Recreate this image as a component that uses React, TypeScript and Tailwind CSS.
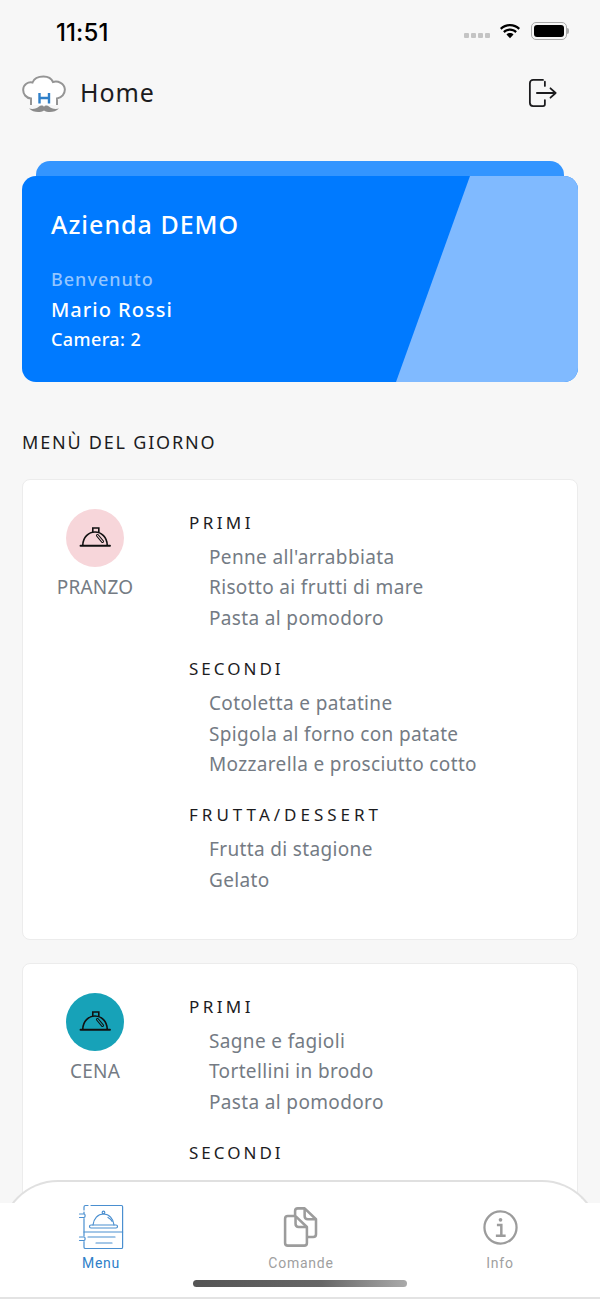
import React from "react";

const font = { fontFamily: '"Noto Sans", sans-serif' };

function Cloche({ inner }: { inner: string }) {
  return (
    <svg width={32} height={32} viewBox="0 0 32 32" fill="none" stroke="#111" strokeWidth="1.6">
      <path d="M1.500 23.700H31" strokeWidth="1.900" strokeLinecap="round" />
      <path d="M3.800 23C4 15.400 9.500 10 16 10C22.500 10 28 15.400 28.200 23" />
      <path d="M13.800 10V6H19.800V10" />
      <path d="M18.500 13.500L23.500 19.500" strokeWidth="3" strokeLinecap="round" />
      <path d="M18.500 13.500L23.500 19.500" strokeWidth="1.100" strokeLinecap="round" stroke={inner} />
    </svg>
  );
}

function Section({ title, items, track }: { title: string; items: string[]; track: string }) {
  return (
    <div className="mb-[26px]">
      <div className={`h-[20px] text-[17px] leading-[20px] text-[#1c1c1e] mb-[9px] ${track}`}>{title}</div>
      <div className="pl-[20px]">
        {items.map((t) => (
          <div key={t} className="h-[30.4px] text-[19px] leading-[30px] text-[#747b84] tracking-[0.35px] whitespace-nowrap">
            {t}
          </div>
        ))}
      </div>
    </div>
  );
}

function MealCard({
  label,
  circle,
  inner,
  sections,
  cls,
}: {
  label: string;
  circle: string;
  inner: string;
  sections: { title: string; track: string; items: string[] }[];
  cls: string;
}) {
  return (
    <div className={`mx-[22px] bg-white rounded-[8px] border border-[#ececec] flex shrink-0 ${cls}`}>
      <div className="w-[144px] shrink-0 flex flex-col items-center pt-[29px]">
        <div className={`w-[58px] h-[58px] rounded-full flex items-center justify-center ${circle}`}>
          <Cloche inner={inner} />
        </div>
        <div className="mt-[8px] text-[19px] leading-[24px] text-[#747b84] tracking-[0.2px]">{label}</div>
      </div>
      <div className="ml-[22px] pt-[33px]">
        {sections.map((s) => (
          <Section key={s.title} {...s} />
        ))}
      </div>
    </div>
  );
}

function Logo() {
  return (
    <svg width="44" height="40" viewBox="0 0 44 40" fill="none">
      <path
        d="M9 32V25.500C4 25 1 21 1.200 16.500C1.500 11.500 6 8.500 10.500 9.500C12 5.500 16.500 3.500 21.500 3.500C26 3.500 29.500 5.500 31 9C36 7.500 42.300 10.500 42.800 16C43.200 21 39.500 25 35 25.500V32"
        stroke="#959595"
        strokeWidth="2"
        fill="#fff"
      />
      <path
        d="M7 35.500C11 36.500 15 35.500 17 33.500C19 32 21 32.500 22 33.800C23 32.500 25 32 27 33.500C29 35.500 33 36.500 37 35.500C33 39.500 26 40 22 37.500C18 40 11 39.500 7 35.500Z"
        fill="#8c8c8c"
      />
      <path d="M17.500 20V30.500M27 20V30.500M17.500 25H27" stroke="#2f80c9" strokeWidth="2.400" />
    </svg>
  );
}

function Wifi() {
  return (
    <svg width="22" height="16" viewBox="0 0 22 16" fill="#000">
      <path d="M11 3.300C14.300 3.300 17.300 4.600 19.500 6.700L21 5C18.400 2.500 14.900 1 11 1C7.100 1 3.600 2.500 1 5L2.500 6.700C4.700 4.600 7.700 3.300 11 3.300Z" />
      <path d="M11 7.800C13 7.800 14.900 8.600 16.300 9.900L17.900 8.200C16 6.500 13.600 5.500 11 5.500C8.400 5.500 6 6.500 4.100 8.200L5.700 9.900C7.100 8.600 9 7.800 11 7.800Z" />
      <path d="M11 10C9.700 10 8.500 10.500 7.500 11.400L11 15.200L14.500 11.400C13.500 10.500 12.300 10 11 10Z" />
    </svg>
  );
}

function MenuBook() {
  return (
    <svg width="46" height="46" viewBox="0 0 46 46" fill="none" stroke="#4a8fd0" strokeWidth="1.200" strokeLinecap="round">
      <path d="M6 6V3C6 2 6.800 1.500 7.500 1.500H10M13 1.500H43.500C44.200 1.500 44.600 2 44.600 2.800V43.200C44.600 44 44.200 44.500 43.500 44.500H7.500C6.800 44.500 6 44 6 43.200V37.500M6 32V14.500M6 9.500V8" />
      <path d="M1.500 10H6C7.500 10 7.500 13.500 6 13.500H1.500M1.500 33H6C7.500 33 7.500 36.500 6 36.500H1.500" />
      <path d="M6 28H44.600" />
      <path d="M13 21H38C40 21 40 24 38 24H13C11 24 11 21 13 21Z" />
      <path d="M15 21C15.500 14.500 20 10 25.500 10C31 10 35.500 14.500 36 21" />
      <circle cx="25.500" cy="8.500" r="1.300" />
      <path d="M30 13.500C32 14.500 33.500 16 34.200 17.500" />
      <path d="M10 33H37M18 39H34" />
    </svg>
  );
}

function Docs() {
  return (
    <svg width="36" height="40" viewBox="0 0 38 44" fill="none" stroke="#9c9c9c" strokeWidth="2.800" strokeLinejoin="round">
      <path d="M12.500 9V4.500C12.500 2.800 13.800 1.500 15.500 1.500H23L35.500 13.500V30C35.500 31.700 34.200 33 32.500 33H26.500" />
      <path d="M23 1.500V10C23 12 24.200 13.500 26.500 13.500H35.500" />
      <path d="M4.500 10H13L25.500 22V39.500C25.500 41.200 24.200 42.500 22.500 42.500H4.500C2.800 42.500 1.500 41.200 1.500 39.500V13C1.500 11.300 2.800 10 4.500 10Z" />
      <path d="M13 10V18.500C13 20.500 14.500 22 16.500 22H25.500" />
    </svg>
  );
}

function Info() {
  return (
    <svg width="35" height="35" viewBox="0 0 34 34" fill="none" stroke="#9c9c9c" strokeWidth="2.200">
      <circle cx="17" cy="17" r="15.600" />
      <circle cx="17" cy="9.500" r="1.800" fill="#9c9c9c" stroke="none" />
      <path d="M13.500 14.500H17.800V24.500M12.500 25H22" strokeWidth="2.400" />
    </svg>
  );
}

function TabItem({ icon, label, active }: { icon: React.ReactNode; label: string; active?: boolean }) {
  return (
    <div className="flex flex-col items-center">
      <div className="h-[46px] flex items-center justify-center">{icon}</div>
      <div
        className={`mt-[5px] text-[14px] leading-[16px] tracking-[0.75px] ${active ? "text-[#2f7fc9]" : "text-[#a0a0a0]"}`}
        style={{ fontFamily: "Roboto, sans-serif" }}
      >
        {label}
      </div>
    </div>
  );
}

export default function App() {
  return (
    <div className="relative w-[600px] h-[1299px] overflow-hidden bg-[#f7f7f7] flex flex-col" style={font}>
      <div className="h-[64px] shrink-0 flex items-start justify-between pl-[56px] pr-[31px] pt-[19px]">
        <div className="text-[24px] leading-[27px] text-black font-medium tracking-[0.1px]" style={{ fontFamily: "Inter, sans-serif" }}>
          11:51
        </div>
        <div className="flex items-center gap-[9px] pt-[3px]">
          <div className="flex gap-[2px] mt-[9px]">
            <span className="w-[5px] h-[5px] rounded-[1px] bg-[#c4c4c4]" />
            <span className="w-[5px] h-[5px] rounded-[1px] bg-[#c4c4c4]" />
            <span className="w-[5px] h-[5px] rounded-[1px] bg-[#c4c4c4]" />
            <span className="w-[5px] h-[5px] rounded-[1px] bg-[#c4c4c4]" />
          </div>
          <Wifi />
          <div className="flex items-center ml-[1px]">
            <div className="w-[36px] h-[18px] rounded-[5px] border border-[#a9a9a9] p-[2px]">
              <div className="w-full h-full rounded-[3px] bg-black" />
            </div>
            <div className="w-[2px] h-[6px] bg-[#a9a9a9] rounded-r-[2px]" />
          </div>
        </div>
      </div>

      <div className="h-[58px] shrink-0 flex items-center justify-between pl-[22px] pr-[42px]">
        <div className="flex items-center gap-[14px]">
          <Logo />
          <div className="text-[25px] leading-[30px] tracking-[0.9px] text-[#1c1c1e] -mt-[3px]">Home</div>
        </div>
        <svg width="30" height="30" viewBox="0 0 32 32" fill="none" stroke="#1c1c1e" strokeWidth="1.900" strokeLinecap="round" strokeLinejoin="round">
          <path d="M16 2H5.500C3.500 2 2 3.500 2 5.500V26.500C2 28.500 3.500 30 5.500 30H16C17.500 30 18 29 18 28V23.500M18 8.500V4" />
          <path d="M9.500 16H29M24 11L29.500 16L24 21" />
        </svg>
      </div>

      <div className="mt-[39px] mx-[36px] h-[15px] shrink-0 rounded-t-[14px] bg-[#3395ff]" />
      <div className="mx-[22px] h-[206px] shrink-0 rounded-[14px] bg-[#007aff] relative overflow-hidden text-white pl-[29px] pt-[32px]">
        <div
          className="absolute inset-0 bg-[#80baff]"
          style={{ clipPath: "polygon(448px 0, 100% 0, 100% 100%, 374px 100%)" }}
        />
        <div className="relative font-medium">
          <div className="text-[25px] leading-[32px] tracking-[1px]">Azienda DEMO</div>
          <div className="mt-[27px] text-[18px] leading-[24px] tracking-[1px] text-[#94c6ff]">Benvenuto</div>
          <div className="mt-[6px] text-[20px] leading-[26px] tracking-[1px]">Mario Rossi</div>
          <div className="mt-[4px] text-[18px] leading-[24px] tracking-[0.4px]">Camera: 2</div>
        </div>
      </div>

      <div className="mt-[48px] mb-[25px] ml-[22px] shrink-0 text-[18px] leading-[24px] tracking-[1.8px] text-[#1c1c1e]">
        MENÙ DEL GIORNO
      </div>

      <MealCard
        label="PRANZO"
        circle="bg-[#f7d6da]"
        inner="#f7d6da"
        cls="h-[461px]"
        sections={[
          { title: "PRIMI", track: "tracking-[3.4px]", items: ["Penne all'arrabbiata", "Risotto ai frutti di mare", "Pasta al pomodoro"] },
          { title: "SECONDI", track: "tracking-[3px]", items: ["Cotoletta e patatine", "Spigola al forno con patate", "Mozzarella e prosciutto cotto"] },
          { title: "FRUTTA/DESSERT", track: "tracking-[4px]", items: ["Frutta di stagione", "Gelato"] },
        ]}
      />
      <MealCard
        label="CENA"
        circle="bg-[#17a2b8]"
        inner="#17a2b8"
        cls="mt-[23px] h-[461px]"
        sections={[
          { title: "PRIMI", track: "tracking-[3.4px]", items: ["Sagne e fagioli", "Tortellini in brodo", "Pasta al pomodoro"] },
          { title: "SECONDI", track: "tracking-[3px]", items: [] },
        ]}
      />

      <div className="absolute left-0 right-0 bottom-0 h-[119px]">
        <div className="absolute left-0 right-0 top-0 h-[80px] bg-white border-t-[2px] border-x-[2px] border-[#e0e0e0] rounded-t-[58px]" />
        <div className="absolute left-0 right-0 top-[23px] bottom-0 bg-white border-b-[2px] border-[#e3e3e3] grid grid-cols-[202px_198px_200px] pt-[1px]">
          <TabItem icon={<MenuBook />} label="Menu" active />
          <TabItem icon={<Docs />} label="Comande" />
          <TabItem icon={<Info />} label="Info" />
        </div>
        <div className="absolute left-[193px] top-[100px] w-[214px] h-[7px] rounded-full bg-[linear-gradient(90deg,#555,#666_60%,#aaa)]" />
      </div>
    </div>
  );
}
